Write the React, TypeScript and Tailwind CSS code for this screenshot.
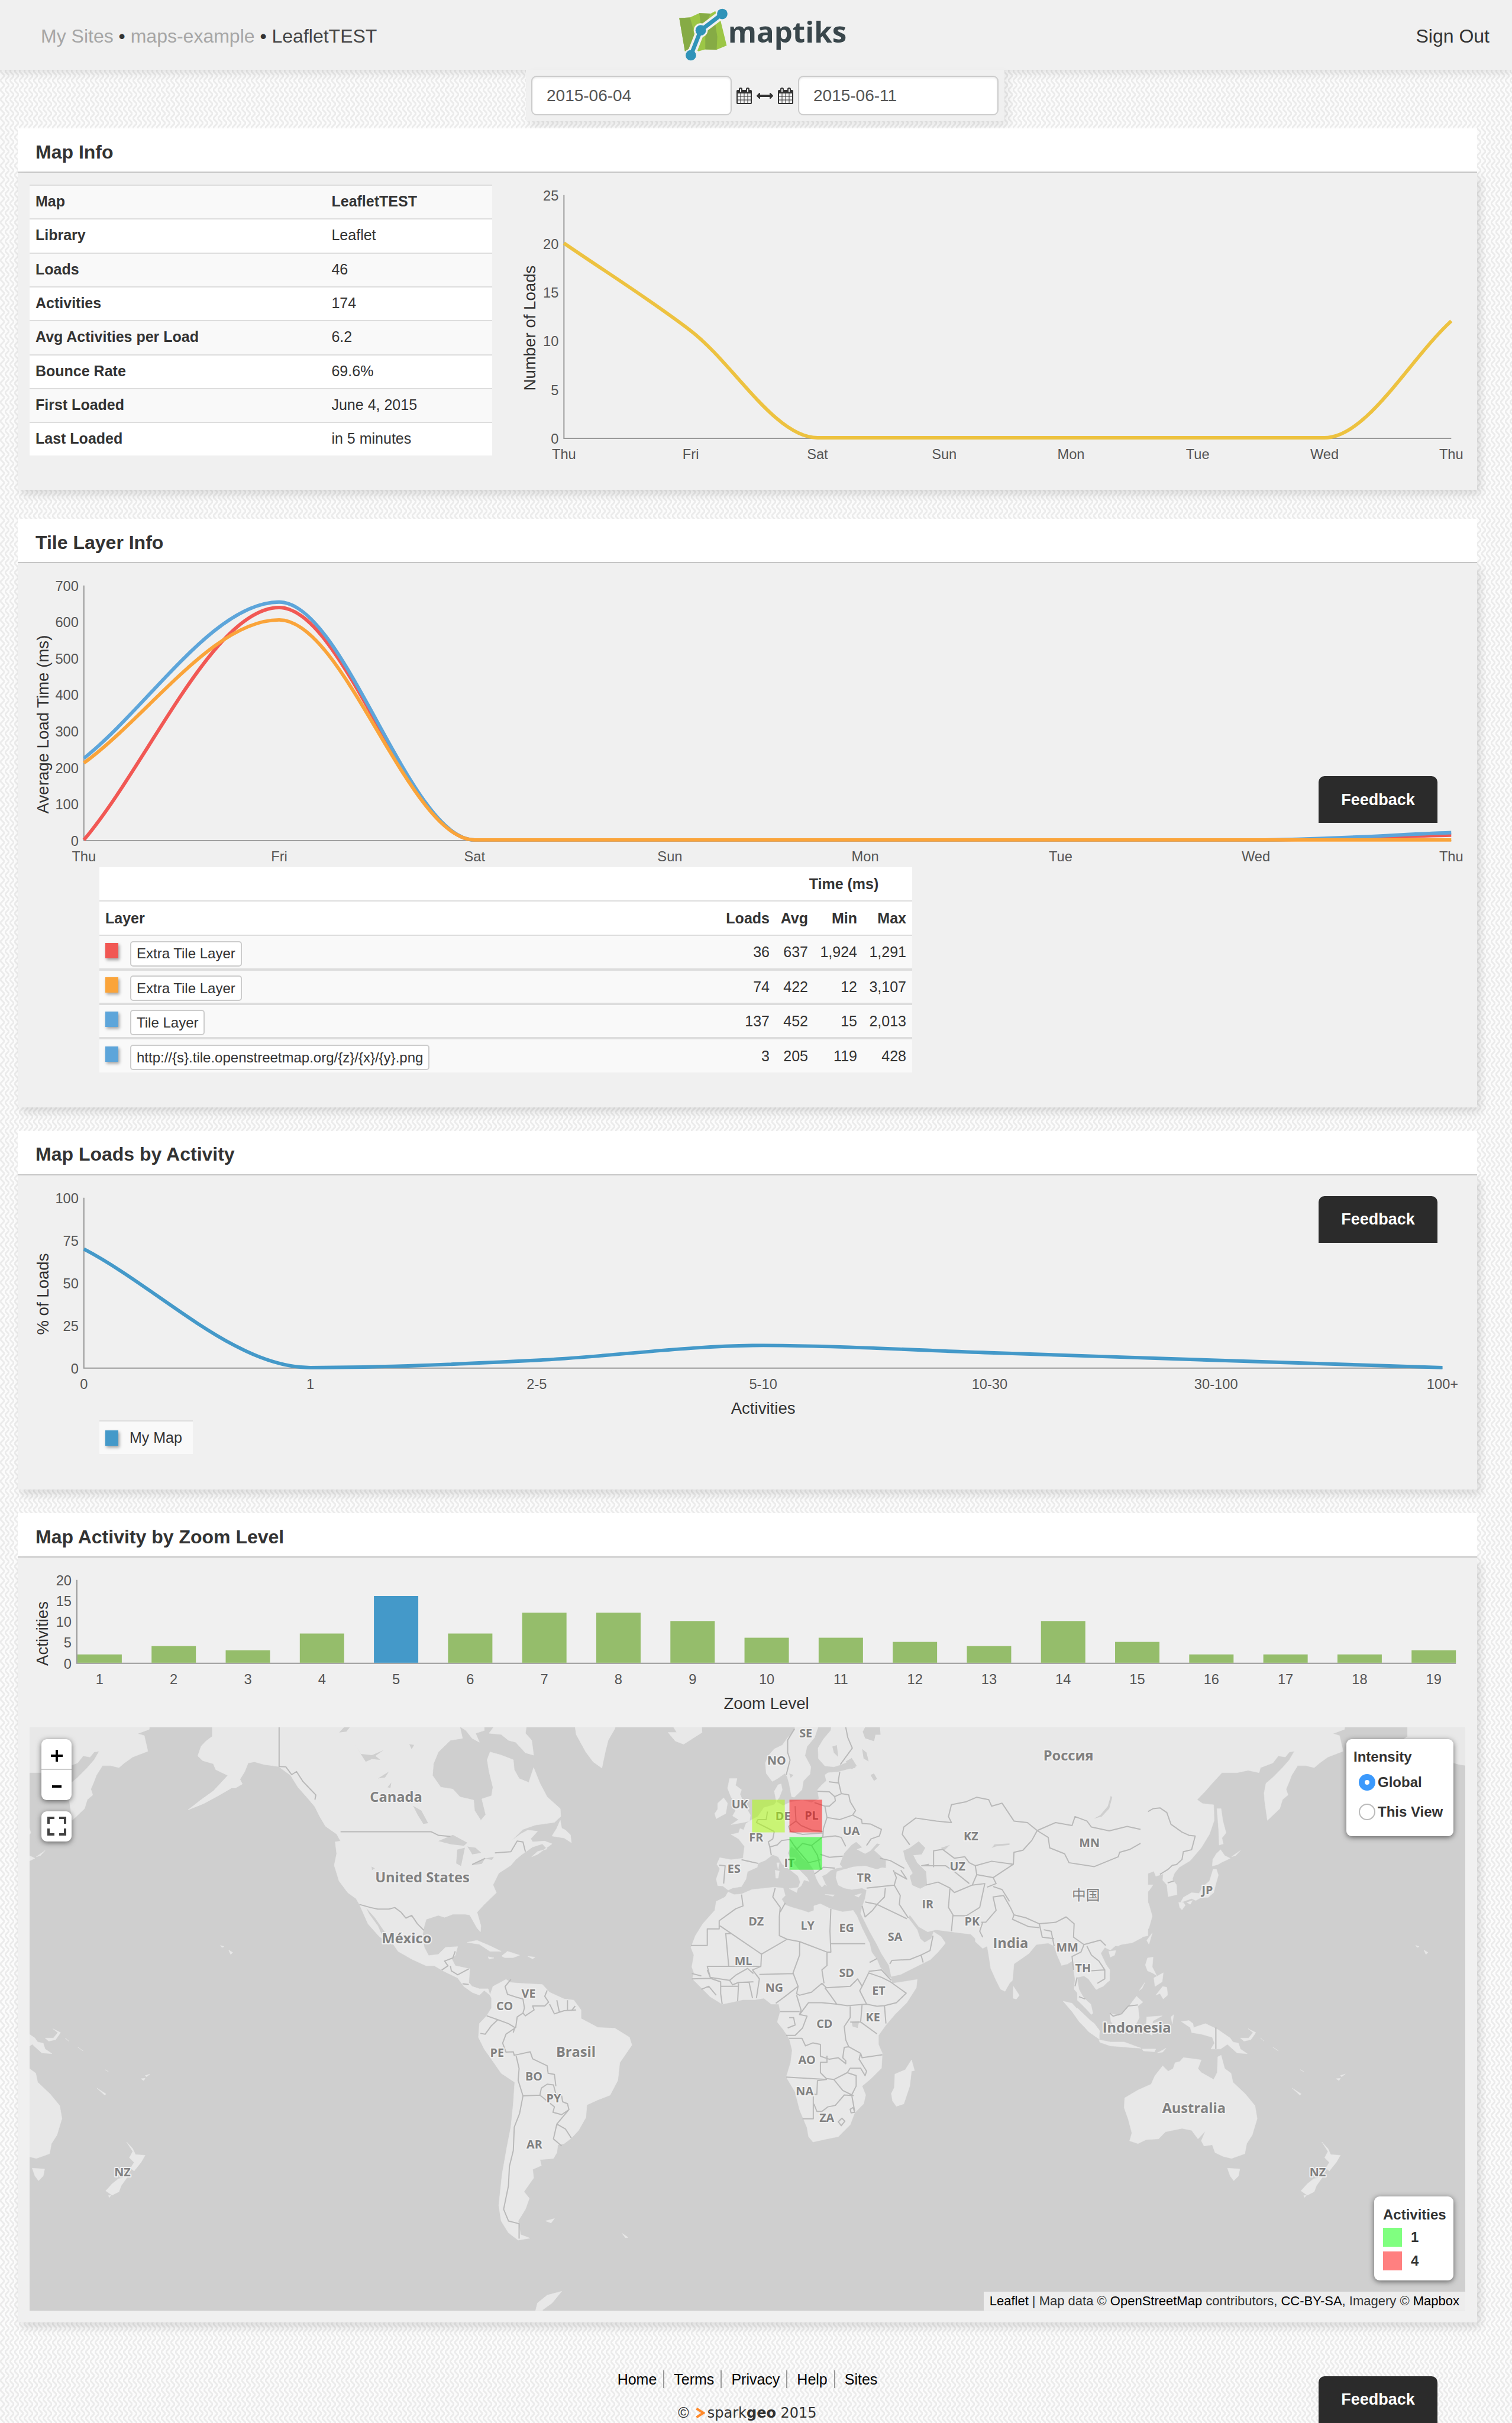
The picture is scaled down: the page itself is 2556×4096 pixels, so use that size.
import React from "react";

type Point = [number, number];

/* Cubic path that never overshoots its data points. */
function smoothPath(points: Point[]): string {
  const n = points.length;
  const slope = points.slice(1).map((p, i) => (p[1] - points[i][1]) / (p[0] - points[i][0]));
  const tangent = points.map((_, i) => {
    if (i === 0) return slope[0];
    if (i === n - 1) return slope[n - 2];
    const a = slope[i - 1];
    const b = slope[i];
    return (Math.sign(a) + Math.sign(b)) * Math.min(Math.abs(a), Math.abs(b), Math.abs(a + b) / 4);
  });
  let d = `M${points[0][0]} ${points[0][1]}`;
  for (let i = 1; i < n; i++) {
    const [x0, y0] = points[i - 1];
    const [x1, y1] = points[i];
    const h = (x1 - x0) / 3;
    d += `C${x0 + h} ${y0 + h * tangent[i - 1]} ${x1 - h} ${y1 - h * tangent[i]} ${x1} ${y1}`;
  }
  return d;
}

interface ChartProps {
  label: string;
  viewBox: string;
  left: number;
  right: number;
  top: number;
  bottom: number;
  max: number;
  yTicks: number[];
  xTicks: { x: number; text: string }[];
  yTitle: string;
  yTitleX: number;
  yTitleY: number;
  xTitle?: string;
  children: React.ReactNode;
}

function Chart(p: ChartProps) {
  const y = (v: number) => p.bottom - (v / p.max) * (p.bottom - p.top);
  return (
    <svg viewBox={p.viewBox} className="block h-auto w-full" role="img" aria-label={p.label}>
      <path d={`M${p.left} ${p.top}V${p.bottom}H${p.right}`} fill="none" stroke="#999" strokeWidth="2" />
      {p.children}
      <g className="fill-[#555] text-[24px]">
        {p.yTicks.map((v) => (
          <text key={v} x={p.left - 9} y={y(v) + 9} textAnchor="end">
            {v}
          </text>
        ))}
        {p.xTicks.map((t, i) => (
          <text key={i} x={t.x} y={p.bottom + 36} textAnchor="middle">
            {t.text}
          </text>
        ))}
      </g>
      <g className="fill-[#333] text-[28px]">
        <text transform={`translate(${p.yTitleX} ${p.yTitleY}) rotate(-90)`} textAnchor="middle">
          {p.yTitle}
        </text>
        {p.xTitle && (
          <text x={(p.left + p.right) / 2} y={p.bottom + 78} textAnchor="middle">
            {p.xTitle}
          </text>
        )}
      </g>
    </svg>
  );
}

const DAYS = ["Thu", "Fri", "Sat", "Sun", "Mon", "Tue", "Wed", "Thu"];

function LoadsChart() {
  const left = 965, right = 2486, top = 334, bottom = 751;
  const x = (i: number) => left + (i * (right - left)) / 7;
  const pts = [20, 11, 0, 0, 0, 0, 0, 12].map((v, i): Point => [x(i), bottom - 1 - (v / 25) * (bottom - top)]);
  return (
    <Chart label="Number of loads per day" viewBox="842 316 1668 484" left={left} right={right} top={top} bottom={bottom}
      max={25} yTicks={[0, 5, 10, 15, 20, 25]} xTicks={DAYS.map((text, i) => ({ x: x(i), text }))}
      yTitle="Number of Loads" yTitleX={916} yTitleY={562}>
      <path d={smoothPath(pts)} fill="none" stroke="#edc240" strokeWidth="6" />
    </Chart>
  );
}

const TILE_SERIES = [
  { color: "#f15854", values: [0, 638, 0, 0, 0, 0, 0, 13] },
  { color: "#5da5da", values: [224, 653, 0, 0, 0, 0, 0, 20] },
  { color: "#faa43a", values: [211, 604, 0, 0, 0, 0, 0, 0] },
];

function TileChart() {
  const left = 143, right = 2486, top = 1004, bottom = 1441;
  const x = (i: number) => left + (i * (right - left)) / 7;
  return (
    <Chart label="Average load time per tile layer" viewBox="50 986 2460 500" left={left} right={right} top={top} bottom={bottom}
      max={700} yTicks={[0, 100, 200, 300, 400, 500, 600, 700]} xTicks={DAYS.map((text, i) => ({ x: x(i), text }))}
      yTitle="Average Load Time (ms)" yTitleX={82} yTitleY={1242}>
      {TILE_SERIES.map((s) => (
        <path key={s.color} fill="none" stroke={s.color} strokeWidth="6"
          d={smoothPath(s.values.map((v, i): Point => [x(i), bottom - 1 - (v / 700) * (bottom - top)]))} />
      ))}
    </Chart>
  );
}

function ActivityChart() {
  const left = 143, right = 2471, top = 2052, bottom = 2344;
  const x = (i: number) => left + (i * (right - left)) / 6;
  const pts = [69.6, 0, 4.3, 13, 8.7, 4.3, 0].map((v, i): Point => [x(i), bottom - 1 - (v / 100) * (bottom - top)]);
  return (
    <Chart label="Percentage of loads by activity count" viewBox="50 2034 2460 400" left={left} right={right} top={top} bottom={bottom}
      max={100} yTicks={[0, 25, 50, 75, 100]}
      xTicks={["0", "1", "2-5", "5-10", "10-30", "30-100", "100+"].map((text, i) => ({ x: x(i), text }))}
      yTitle="% of Loads" yTitleX={82} yTitleY={2217} xTitle="Activities">
      <path d={smoothPath(pts)} fill="none" stroke="#4499c9" strokeWidth="6" />
    </Chart>
  );
}

const ZOOM_COUNTS = [2, 4, 3, 7, 16, 7, 12, 12, 10, 6, 6, 5, 4, 10, 5, 2, 2, 2, 3];

function ZoomChart() {
  const left = 131, right = 2494, top = 2706, bottom = 2849;
  const x = (i: number) => 132 + i * 127;
  return (
    <Chart label="Map activities by zoom level" viewBox="50 2688 2460 270" left={left} right={right} top={top} bottom={bottom}
      max={20} yTicks={[0, 5, 10, 15, 20]} xTicks={ZOOM_COUNTS.map((_, i) => ({ x: x(i) + 38, text: String(i + 1) }))}
      yTitle="Activities" yTitleX={81} yTitleY={2798} xTitle="Zoom Level">
      {ZOOM_COUNTS.map((v, i) => {
        const h = (v / 20) * (bottom - top);
        return <rect key={i} x={x(i)} y={bottom - 1 - h} width="76" height={h} fill={i === 4 ? "#4499c9" : "#95bd6b"} />;
      })}
    </Chart>
  );
}

/* ---------- World map drawing ---------- */

const AMERICAS_LAND = [
  "M438 0L438 50L425 62L415 75L408 100L418 112L440 120L445 135L470 150L455 170L440 190L415 212L388 238L420 222L450 202L478 182L486 182L500 172L495 160L505 140L512 118L525 115L545 122L575 127L600 150L615 180L635 208L650 230L660 255L672 280L695 300L703 318L692 320L695 350L690 380L700 420L718 450L735 465L742 480L760 530L783 562L792 570L780 535L762 505L755 487L775 515L800 560L822 600L850 620L880 637L897 637L915 650L945 668L958 690L975 705L990 712L1000 700L1012 712L1008 696L990 696L975 690L968 680L970 645L940 637L933 620L940 610L945 588L920 590L905 608L885 611L876 590L872 560L876 535L880 518L905 508L918 513L935 505L960 505L970 507L985 540L992 550L993 535L985 500L1000 480L1025 450L1018 430L1030 400L1055 380L1065 365L1078 352L1100 333L1120 325L1130 338L1110 345L1098 358L1110 352L1140 325L1125 318L1100 320L1096 312L1110 293L1090 290L1075 300L1055 318L1080 288L1105 277L1145 270L1158 255L1157 235L1130 205L1115 170L1102 130L1092 168L1072 158L1062 135L1060 110L1035 98L1012 90L1006 110L1010 140L1018 180L1015 202L995 210L1003 250L993 265L980 240L978 213L950 205L935 185L910 180L893 150L895 120L905 90L930 60L955 55L945 0Z",
  "M1010 42L1035 45L1050 60L1065 65L1085 92L1102 98L1098 60L1085 42L1090 0L1035 0Z",
  "M950 25L962 35L975 55L990 65L982 42L1000 35L1000 0L950 0Z",
  "M1157 265L1150 285L1140 305L1165 310L1180 322L1178 302L1168 290L1160 285Z",
  "M1185 0L1190 45L1210 90L1225 115L1243 131L1250 90L1256 60L1270 30L1275 0Z",
  "M1380 40L1398 40L1388 20L1390 0L1448 0L1450 40L1412 70L1395 62Z",
  "M965 577L985 572L1010 585L1035 600L1012 600L990 582Z",
  "M1036 612L1048 600L1073 610L1060 616L1042 616Z M1090 613L1105 615L1100 619Z M1008 614L1020 617L1010 620Z",
  "M472 597L480 603L476 608Z M455 585L462 588L458 590Z",
  "M1012 712L1018 690L1045 672L1055 680L1075 682L1120 685L1135 705L1165 722L1185 725L1200 750L1200 772L1235 795L1270 797L1300 820L1305 840L1280 885L1276 930L1260 968L1235 980L1212 993L1210 1025L1195 1058L1180 1078L1165 1092L1152 1095L1150 1115L1143 1130L1115 1133L1118 1148L1100 1158L1102 1180L1082 1215L1093 1232L1085 1260L1070 1290L1075 1325L1094 1334L1070 1339L1050 1320L1035 1290L1030 1250L1037 1170L1047 1100L1055 1050L1060 990L1063 935L1035 912L1020 885L1000 850L988 820L990 785L1005 765L1015 745L1015 720Z",
  "M1127 1290L1145 1284L1138 1295Z M1285 1322L1297 1332L1292 1333Z",
  "M1105 1525L1110 1500L1130 1480L1160 1470L1140 1500L1120 1518L1125 1525Z",
];

const AMERICAS_LAKES =
  "M905 318L935 302L965 322L958 330L930 326ZM944 340L960 335L952 382L942 375ZM965 332L982 335L994 348L975 352L972 345ZM973 380L1002 362L995 376ZM1000 363L1020 358L1016 366ZM853 228L870 240L884 272L874 274L862 250ZM780 158L803 140L795 155ZM732 70L745 95L768 98L792 85L775 100L785 110L768 108L755 115ZM845 70L855 72L850 83ZM800 180L808 168L806 182ZM767 383L774 388L768 392ZM700 40L710 27L722 27L715 38Z";

const AMERICAS_BORDERS =
  "M576 0V127L590 128L602 148L612 140L625 165L638 182L652 200L650 212M703 294H890L905 303L930 306M975 378L1002 362M1022 348L1055 345L1068 318L1080 320L1085 345M742 480L765 488L780 492L803 492L815 488L828 500L838 515L850 508L862 530L875 546M912 648L925 637L918 625L935 617L940 600M930 637L932 650L945 660L968 645M955 683L968 685M1055 672L1043 690L1048 710L1068 718L1080 722L1083 745L1080 758L1068 768L1065 795L1045 812L1038 835L1045 858L1060 857L1062 866L1095 857L1100 875L1130 893L1132 912L1145 915L1148 945M1130 700L1125 715L1133 730L1125 740L1100 740L1103 750L1085 765L1080 758M1135 735L1145 760L1165 752L1190 750M1150 725L1155 755M1172 725V750M1188 740L1180 752M1005 765L1028 775L1015 790L1002 812L992 810M1028 775L1050 785L1063 795L1060 808M1066 868L1072 900L1070 930L1080 970L1115 968L1118 950L1130 940L1143 942L1148 965L1160 970L1162 985L1172 990L1175 1005L1160 1018L1142 1012L1145 998L1115 968M1175 1005L1150 1042L1168 1055L1180 1078M1150 1042L1143 1080L1160 1098M1080 970L1073 1015L1062 1050L1060 1110L1052 1150L1050 1200L1040 1260L1050 1290L1072 1297V1335";

const EURAFRICA_LAND = [
  "M418 0L413 45L390 70L372 95L345 108L325 130L315 155L318 190L338 217L355 208L380 190L388 200L395 225L403 268L412 270L425 258L438 245L443 215L465 192L468 168L448 130L455 100L480 70L492 35L495 0Z",
  "M540 0L535 45L510 75L492 105L493 140L515 165L545 168L565 162L595 150L612 148L618 172L598 175L560 185L525 188L515 195L520 215L505 228L490 245L495 275L470 288L440 280L400 286L375 298L352 285L345 250L358 228L368 225L372 245L362 270L345 295L310 305L290 335L270 345L250 358L242 380L230 375L225 390L200 395L225 410L245 435L240 475L200 480L162 473L152 495L162 510L150 545L155 567L172 568L190 582L205 575L235 570L250 545L255 520L288 505L290 492L315 482L340 463L358 470L372 495L400 515L425 535L432 555L425 575L435 568L445 548L462 553L455 540L425 510L405 485L390 458L402 435L420 448L440 475L465 495L478 515L485 540L495 560L505 572L515 562L520 568L505 535L520 528L535 515L555 508L575 505L575 470L720 480L720 508L650 500L610 503L580 512L555 520L552 540L560 565L580 575L605 580L640 575L655 582L650 610L640 640L635 660L665 720L690 765L705 795L730 835L738 872L770 865L840 830L870 815L895 790L920 760L905 738L880 722L872 745L850 758L835 745L825 715L795 675L800 665L830 705L860 722L888 715L940 722L1005 730L1020 745L1020 755L1045 778L1060 770L1065 800L1072 845L1090 885L1105 915L1120 922L1135 895L1145 885L1150 830L1200 795L1225 765L1265 760L1285 770L1295 800L1310 835L1330 830L1345 820L1355 880L1352 915L1370 935L1378 965L1410 1000L1415 995L1408 965L1385 945L1368 915L1362 875L1385 870L1400 880L1425 915L1450 905L1470 885L1472 850L1450 820L1432 790L1440 770L1470 765L1500 770L1530 750L1600 735L1600 0Z",
  "M195 207L220 207L215 230L235 245L230 260L245 295L265 330L262 350L240 355L200 362L225 345L205 333L215 315L205 300L215 290L200 270L188 240Z",
  "M155 290L175 272L188 290L182 325L150 342L145 325L155 310Z",
  "M395 577L425 573L420 590ZM348 515L362 518L358 542L350 542ZM353 490L362 490L358 512ZM515 596L547 598L542 603ZM615 600L638 593L628 606Z",
  "M190 588L210 597L235 595L270 580L345 572L375 575L382 600L370 612L382 632L405 640L440 650L460 657L478 650L478 635L500 628L535 645L575 655L610 650L622 668L640 710L665 760L672 790L690 815L700 840L725 870L738 878L740 895L775 890L825 882L822 910L790 960L750 1000L720 1035L695 1070L695 1100L708 1130L705 1180L670 1215L640 1240L652 1270L645 1300L615 1330L600 1370L560 1410L520 1418L475 1428L460 1410L455 1380L430 1320L415 1260L385 1210L400 1160L405 1120L395 1080L375 1050L355 1025L365 990L360 965L335 965L310 945L280 950L240 950L205 958L170 965L130 940L100 910L70 880L75 860L68 840L75 800L65 775L80 735L105 695L145 650L150 620L180 605Z",
  "M806 1152L816 1188L806 1190L800 1240L780 1300L755 1308L742 1290L738 1265L748 1245L750 1200L785 1185Z",
  "M1148 905L1168 935L1158 948L1147 945Z",
  "M1315 955L1345 962L1380 1000L1420 1030L1438 1055L1435 1080L1405 1060L1370 1025L1345 990Z",
];

const EURAFRICA_WATER =
  "M650 35L700 35L702 60L685 60L680 82L650 72L642 50ZM585 150L605 138L622 165L605 176ZM640 108L655 120L662 150L645 140ZM668 195L680 190L690 208L680 215ZM565 495L580 458L605 430L620 420L640 438L622 445L650 460L668 450L690 425L700 428L680 448L710 475L720 500L690 512L650 500L610 503L580 512ZM778 450L800 440L830 418L852 440L840 462L812 465L825 490L855 520L858 565L835 577L808 565L800 535L810 525L785 480ZM1418 342L1440 330L1465 300L1475 265L1480 270L1470 308L1445 335ZM1075 440L1085 428L1135 425L1135 430L1090 435ZM605 1025L630 1022L625 1045L608 1040ZM905 440L935 430L915 450ZM395 190L410 195L400 205ZM540 100L555 95L560 135L545 120Z";

const EURAFRICA_BORDERS =
  "M413 40L390 78L390 120L398 145L385 195M585 35L592 70L607 105L567 160M565 185L560 215L570 258L548 268L530 252L490 250M528 218L560 222M548 268L550 282L530 300L515 300L522 338L565 345L608 330L618 315L600 285L595 262L570 258M515 300L480 288M608 330L638 345L640 358L668 360L705 378L698 400L670 410L655 432M522 338L510 375L508 405M415 300L418 350L435 365L470 380L508 385M418 350L393 368L400 385L440 395L508 390M322 318L318 345L290 345L285 355L325 375L345 385M345 385L340 410L325 420L330 437L355 430L370 415L398 412M330 437L335 465M235 480L290 492M160 498L180 500L175 560M398 412L420 445L440 425L470 432L505 405L550 400L570 405L585 435M500 462L530 472L575 468M410 430L430 455L460 490L500 480M470 432L490 465L500 510M480 528L510 505L548 508M700 475L735 483L780 508L765 500M745 515L755 540L748 565L655 575M748 565L768 600L765 630L795 675M718 575L715 605L690 630L790 678M650 622L690 630L675 650L650 672L640 635M745 520L790 545L770 515M733 830L740 818L800 815L838 800L868 785L878 735M838 800L845 825M855 565L895 555L935 575L930 640L945 665L940 720M945 668L990 668L1035 640L1052 560L1010 565L950 590L935 575M1000 560L950 520L920 500L840 500L865 495M880 505V450L910 445L950 475L985 470L1000 490L1020 500L1075 485L1148 495M1020 500L1025 530L1080 540L1090 560L1060 572M1025 530L1010 565M1040 690L1055 690L1090 650L1080 605L1115 600L1138 640L1150 665L1190 675L1235 695L1290 690L1325 672L1352 695L1350 740L1385 765L1440 750L1458 768M1045 690L1035 720L1045 740M1080 570L1110 580L1135 620M1235 695L1245 740L1285 745M1150 665L1145 680L1200 705L1235 708M1250 715L1275 720L1285 770M800 430L775 395L780 370L820 340L890 350L940 355L930 335L940 295L990 285L1025 270L1065 278L1075 300L1110 290L1150 350L1195 355L1228 382L1210 415L1180 448L1150 455L1148 495L1080 540M1228 382L1290 355L1345 365L1355 335L1395 350L1410 370L1470 383L1530 368L1575 378M1228 382L1265 405L1270 440L1320 460L1335 490L1420 503L1500 470L1505 455L1540 445L1575 425M1385 765L1375 790L1345 805L1350 850M1395 770L1410 800L1435 820L1455 850L1410 853M1455 850V880L1430 895M1362 875L1355 905M1368 940L1390 948M235 597L240 635L215 645L160 685V712H120V768H65M160 700L302 797L300 838H120L130 875M192 838L182 728H200M302 797L388 747L430 755L522 790V835L505 850L512 895M388 747L362 735V670L365 640L340 605L348 575M365 655L382 625M535 645L532 720L535 790L522 790M535 762H650M430 755L430 800L408 860L425 905L380 940L350 962M295 865L408 862M300 838L272 850L295 880L285 945M120 850L130 875L195 885L215 868L255 845L275 862M195 885L205 900L225 892L275 890M225 895L222 955M260 890L272 945M68 862L100 870M68 880L130 878L165 890V930L170 965M100 915L125 905L150 935M165 905L222 905M425 905L420 930L430 935L470 925L505 895L520 910L600 905L625 880L640 905L632 920L655 965L590 970L555 965L530 930L515 910M420 935L435 985L430 1000L460 960L505 960L555 965M430 1000L455 1005L440 1045L415 1070L385 1070M365 990H430M395 1010L410 1010L415 1035L390 1045M655 965L690 972L715 970L720 1030M640 905L662 860L705 875L735 890L788 928L755 960L715 970M665 825L690 812M662 855L705 850L738 885M600 970L600 1010L580 1040L585 1085L595 1108L635 1130L640 1145L708 1135M600 1025L635 1025L690 1065M635 1025L640 965M395 1080H438L450 1105L475 1095L500 1100V1140L530 1150L560 1145L585 1165V1155L575 1145L580 1110L595 1108M522 1138V1160H500V1195L520 1215L545 1218L590 1195L600 1180L635 1180L650 1205L655 1190L630 1150L635 1130M385 1210L520 1218L490 1222L488 1268H476V1350H440M545 1218L575 1255L610 1272L580 1270L550 1305L525 1310L505 1325L488 1325L478 1300M590 1195L620 1205V1240L605 1270L615 1325M560 1360L572 1348L582 1358L570 1373ZM600 1318L610 1312L615 1328L603 1330Z";

const PACIFIC_LAND = [
  "M-20 0L965 0L960 32L918 43L942 48L955 88L900 103L870 118L850 130L820 125L790 125L768 150L760 165L748 185L755 200L735 212L725 235L695 255L680 265L670 215L668 195L675 170L700 155L735 130L760 110L778 88L760 90L745 103L720 100L700 118L655 130L650 143L610 137L570 143L515 143L480 170L455 190L425 212L445 222L485 225L487 265L470 300L440 335L400 368L360 385L343 400L335 415L350 430L352 455L320 460L315 430L300 418L302 402L275 408L268 395L242 402L215 412L222 430L265 430L250 445L232 455L250 480L262 510L250 540L225 565L190 578L130 585L110 597L90 590L75 605L105 650L107 675L85 685L60 698L50 680L20 655L-20 640Z",
  "M497 235L512 235L518 265L530 297L515 310L520 325L505 328L503 290Z",
  "M480 382L482 365L495 350L510 340L525 355L545 362L515 372L500 378Z",
  "M483 390L495 390L502 405L492 430L485 450L465 462L440 462L420 470L405 465L385 470L365 475L375 462L405 450L432 452L445 435L470 420Z",
  "M358 475L375 475L382 482L370 494L362 488ZM388 475L408 470L400 480ZM550 358L582 342L565 355Z",
  "M262 553L250 582L242 572Z",
  "M104 600L130 598L125 610L110 615Z",
  "M245 617L265 615L262 640L278 662L262 655L245 650L237 635ZM268 668L302 655L298 678L272 690ZM275 712L300 690L315 692L318 712L302 722L290 708ZM215 700L235 680L225 695Z",
  "M108 758L140 765L178 740L205 715L228 730L210 740L215 770L200 790L180 810L130 795L112 780Z",
  "M242 768L298 765L265 778L262 785L285 780L275 800L262 795L262 815L248 810L240 790ZM330 768L340 762L335 785Z",
  "M-10 745L30 772L68 800L70 825L30 805L-10 770ZM-10 705L20 722L45 760L20 745L-10 725Z",
  "M68 826L110 832L160 832L222 848L180 846L110 842L72 833ZM225 850H275L270 857L230 855ZM280 860L312 848L300 858Z",
  "M368 780L395 777L410 785L412 795L455 785L500 800L545 822L555 832L575 835L582 850L607 862L570 860L535 838L510 850L475 850L488 835L480 820L440 812L405 808L400 795Z",
  "M582 822L612 822L628 808L610 798L638 808L620 826L595 830ZM655 822L668 830ZM700 845L720 855Z",
  "M162 975L210 955L258 940L272 918L300 893L320 907L338 900L345 885L362 882L375 872L410 875L440 878L428 900L440 910L485 928L498 910L500 870L512 866L525 900L548 912L555 935L600 965L635 995L643 1028L625 1070L605 1092L598 1118L570 1125L550 1130L520 1125L490 1115L480 1095L450 1098L440 1085L455 1060L428 1080L405 1058L370 1053L310 1062L285 1080L240 1082L210 1092L180 1085L188 1065L175 1030L160 1000Z",
  "M535 1155L580 1157L575 1175L558 1187L545 1175Z",
  "M878 1088L900 1105L910 1120L945 1122L930 1140L905 1162L892 1155L905 1140L888 1128L900 1112Z",
  "M848 1182L880 1178L858 1200L850 1215L825 1224L802 1213L825 1195Z",
  "M770 950L803 965L798 968ZM930 926L945 925L940 931ZM945 918L963 914L950 921ZM800 903L812 908ZM812 1225L822 1224L815 1230Z",
];

const PACIFIC_BORDERS =
  "M-10 370L55 383L100 375L140 358L138 345L160 345L185 335L215 320L238 322L215 310L185 305L200 285L225 280L240 245L265 235L290 233L315 245L330 275L370 295L395 303L418 305L405 340L375 345L370 365L350 378L335 380L320 390L290 403M-10 258L30 270L75 278L120 292L160 290L200 285M318 425L340 420M493 795V850M108 758L120 766L150 760L175 740L210 737";

const MAP_LABELS: [string, number, number, "lg" | "sm"][] = [
  ["Canada", 678, 3077, "lg"], ["United States", 723, 3215, "lg"], ["México", 696, 3319, "lg"], ["Brasil", 986, 3514, "lg"],
  ["Россия", 1830, 3006, "lg"], ["中国", 1860, 3245, "lg"], ["India", 1731, 3327, "lg"], ["Indonesia", 1947, 3472, "lg"],
  ["Australia", 2045, 3610, "lg"], ["VE", 905, 3414, "sm"], ["CO", 864, 3436, "sm"], ["PE", 851, 3516, "sm"], ["BO", 914, 3556, "sm"],
  ["PY", 948, 3594, "sm"], ["AR", 915, 3673, "sm"], ["NZ", 209, 3720, "sm"], ["NZ", 2257, 3720, "sm"], ["SE", 1380, 2968, "sm"],
  ["NO", 1330, 3015, "sm"], ["UK", 1267, 3090, "sm"], ["DE", 1341, 3110, "sm"], ["PL", 1390, 3109, "sm"], ["FR", 1295, 3147, "sm"],
  ["UA", 1458, 3135, "sm"], ["KZ", 1663, 3145, "sm"], ["MN", 1866, 3156, "sm"], ["ES", 1257, 3200, "sm"], ["IT", 1352, 3190, "sm"],
  ["TR", 1480, 3216, "sm"], ["UZ", 1640, 3196, "sm"], ["IR", 1589, 3261, "sm"], ["DZ", 1295, 3291, "sm"], ["LY", 1383, 3298, "sm"],
  ["EG", 1450, 3302, "sm"], ["SA", 1533, 3317, "sm"], ["PK", 1665, 3291, "sm"], ["MM", 1828, 3335, "sm"], ["TH", 1855, 3371, "sm"],
  ["ML", 1273, 3358, "sm"], ["SD", 1450, 3379, "sm"], ["ET", 1505, 3409, "sm"], ["NG", 1326, 3404, "sm"], ["KE", 1495, 3455, "sm"],
  ["CD", 1412, 3466, "sm"], ["AO", 1382, 3528, "sm"], ["NA", 1378, 3581, "sm"], ["ZA", 1416, 3627, "sm"], ["JP", 2068, 3237, "sm"],
];

function Region(p: { transform: string; land: string[]; water?: string; borders: string }) {
  return (
    <g transform={p.transform}>
      {p.land.map((d, i) => (
        <path key={i} d={d} fill="#e8e8e8" stroke="#e8e8e8" strokeWidth="1" strokeLinejoin="round" />
      ))}
      {p.water && <path d={p.water} fill="#cfcfcf" />}
      <path d={p.borders} fill="none" stroke="#b9b9b9" strokeWidth="2" strokeLinejoin="round" vectorEffect="non-scaling-stroke" />
    </g>
  );
}

function WorldMap() {
  return (
    <svg viewBox="50 2958 2460 1000" className="block h-auto w-full overflow-visible" role="img" aria-label="World map of activity">
      <defs>
        <g id="world">
          <Region transform="translate(0 2940) scale(.82908 .66964)" land={AMERICAS_LAND} water={AMERICAS_LAKES} borders={AMERICAS_BORDERS} />
          <Region transform="translate(1850 2940) scale(.47194 .66964)" land={PACIFIC_LAND} borders={PACIFIC_BORDERS} />
          <Region transform="translate(1150 2940) scale(.5102)" land={EURAFRICA_LAND} water={EURAFRICA_WATER} borders={EURAFRICA_BORDERS} />
        </g>
        <clipPath id="map-frame">
          <rect x="50" y="2958" width="2460" height="1000" />
        </clipPath>
      </defs>
      <g clipPath="url(#map-frame)">
        <rect x="50" y="2958" width="2460" height="1000" fill="#cfcfcf" />
        <use href="#world" x="-2048" />
        <use href="#world" x="2048" />
        <use href="#world" />
      </g>
      <g textAnchor="middle" fill="#808080" stroke="#f0f0f0" strokeWidth="4" strokeLinejoin="round" paintOrder="stroke"
        className="font-['Open_Sans','Noto_Sans_CJK_SC',sans-serif]">
        {MAP_LABELS.map(([name, x, y, size], i) => (
          <text key={i} x={x} y={y + (size === "lg" ? 9 : 7)} fontWeight={name === "中国" ? 400 : 700}
            className={size === "lg" ? "text-[24px]" : "text-[20px]"}>
            {name}
          </text>
        ))}
      </g>
      <rect x="1288" y="3082" width="56" height="56" fill="#af0" fillOpacity=".5" />
      <rect x="1352" y="3082" width="56" height="56" fill="#f00" fillOpacity=".5" />
      <rect x="1352" y="3146" width="56" height="56" fill="#0f0" fillOpacity=".5" />
    </svg>
  );
}

/* ---------- Page pieces ---------- */

function Logo() {
  return (
    <svg viewBox="1140 0 310 120" className="h-[118px] w-[306px]" role="img" aria-label="maptiks">
      <g transform="translate(860 0) scale(.574 .3333)">
        <path d="M528 93L560 90L588 68L622 70L636 57L645 100L652 108L670 235L640 256L606 255L585 265L568 240L545 265Z" fill="#9cc646" />
        <path d="M528 93L560 90L570 150L573 200L568 240L545 265ZM588 68L622 70L612 105L600 130L592 120ZM606 165L636 125L642 190L640 256L606 255Z" fill="#86ab45" />
      </g>
      <path d="M1237 24L1200 52L1183 95" fill="none" stroke="#f0f0f0" strokeWidth="15" />
      <circle cx="1200" cy="52" r="12" fill="#f0f0f0" />
      <circle cx="1237" cy="24" r="11" fill="#f0f0f0" />
      <circle cx="1183" cy="95" r="11" fill="#f0f0f0" />
      <path d="M1237 24L1200 52L1183 95" fill="none" stroke="#2f93b8" strokeWidth="7" />
      <circle cx="1237" cy="24" r="9" fill="#2f93b8" />
      <circle cx="1200" cy="52" r="9" fill="#2f93b8" />
      <circle cx="1183" cy="95" r="9" fill="#2f93b8" />
      <text x="1247" y="73" fill="#39464b" className="font-['Open_Sans',sans-serif] text-[50px] font-bold">
        maptiks
      </text>
    </svg>
  );
}

function CalendarIcon() {
  return (
    <svg viewBox="0 0 1664 1792" className="h-7 w-[26px]" fill="#333" aria-hidden="true">
      <path d="M128 1664h288v-288h-288v288zM480 1664h320v-288h-320v288zM128 1312h288v-320h-288v320zM480 1312h320v-320h-320v320zM128 928h288v-288h-288v288zM864 1664h320v-288h-320v288zM480 928h320v-288h-320v288zM1248 1664h288v-288h-288v288zM864 1312h320v-320h-320v320zM512 448v-288q0-13-9.5-22.5t-22.5-9.5h-64q-13 0-22.5 9.5t-9.5 22.5v288q0 13 9.5 22.5t22.5 9.5h64q13 0 22.5-9.5t9.5-22.5zM1248 1312h288v-320h-288v320zM864 928h320v-288h-320v288zM1248 928h288v-288h-288v288zM1280 448v-288q0-13-9.5-22.5t-22.5-9.5h-64q-13 0-22.5 9.5t-9.5 22.5v288q0 13 9.5 22.5t22.5 9.5h64q13 0 22.5-9.5t9.5-22.5zM1664 384v1280q0 52-38 90t-90 38h-1408q-52 0-90-38t-38-90v-1280q0-52 38-90t90-38h128v-96q0-66 47-113t113-47h64q66 0 113 47t47 113v96h384v-96q0-66 47-113t113-47h64q66 0 113 47t47 113v96h128q52 0 90 38t38 90z" fillRule="evenodd" />
    </svg>
  );
}

function ArrowsIcon() {
  return (
    <svg viewBox="0 0 1792 1792" className="size-7" fill="#333" aria-hidden="true">
      <path d="M1792 896q0 26-19 45l-256 256q-19 19-45 19t-45-19-19-45v-128h-1024v128q0 26-19 45t-45 19-45-19l-256-256q-19-19-19-45t19-45l256-256q19-19 45-19t45 19 19 45v128h1024v-128q0-26 19-45t45-19 45 19l256 256q19 19 19 45z" />
    </svg>
  );
}

function Panel(p: { title: string; className?: string; children: React.ReactNode }) {
  return (
    <section className={p.className}>
      <h2 className="flex h-[75px] items-center border-b-2 border-[#c8c8c8] bg-white px-[30px] pt-[6px] text-[32px] font-bold">{p.title}</h2>
      <div className="bg-[#f0f0f0] px-5 pt-5 shadow-[6px_8px_14px_rgba(0,0,0,0.12)]">{p.children}</div>
    </section>
  );
}

function FeedbackButton({ className }: { className: string }) {
  return (
    <button type="button" className={`absolute h-[79px] w-[201px] rounded-t-[10px] bg-[#2b2b2b] text-[27px] font-bold text-white ${className}`}>
      Feedback
    </button>
  );
}

const MAP_INFO = [
  ["Map", "LeafletTEST"],
  ["Library", "Leaflet"],
  ["Loads", "46"],
  ["Activities", "174"],
  ["Avg Activities per Load", "6.2"],
  ["Bounce Rate", "69.6%"],
  ["First Loaded", "June 4, 2015"],
  ["Last Loaded", "in 5 minutes"],
];

function MapInfoTable() {
  return (
    <table className="h-[458px] w-full table-fixed text-left text-[25px] leading-8">
      <tbody>
        {MAP_INFO.map(([k, v], i) => (
          <tr key={k} className="border-t-2 border-[#ddd] odd:bg-[#f9f9f9] even:bg-white">
            <th scope="row" className="w-[64%] px-[10px] pb-[3px]">{k}</th>
            <td className={i === 0 ? "px-[10px] pb-[3px] font-bold" : "px-[10px] pb-[3px]"}>{v}</td>
          </tr>
        ))}
      </tbody>
    </table>
  );
}

function Swatch({ className }: { className: string }) {
  return <span className={`block h-[26px] w-[22px] shadow-[2px_3px_5px_rgba(0,0,0,0.35)] ${className}`} />;
}

const LAYERS = [
  { name: "Extra Tile Layer", color: "bg-[#f15854]", loads: "36", avg: "637", min: "1,924", max: "1,291" },
  { name: "Extra Tile Layer", color: "bg-[#faa43a]", loads: "74", avg: "422", min: "12", max: "3,107" },
  { name: "Tile Layer", color: "bg-[#5da5da]", loads: "137", avg: "452", min: "15", max: "2,013" },
  { name: "http://{s}.tile.openstreetmap.org/{z}/{x}/{y}.png", color: "bg-[#5da5da]", loads: "3", avg: "205", min: "119", max: "428" },
];

function LayerTable() {
  return (
    <table className="ml-[118px] w-[1374px] table-fixed text-right text-[25px] leading-8">
      <colgroup>
        <col />
        <col className="w-[98px]" />
        <col className="w-[65px]" />
        <col className="w-[83px]" />
        <col className="w-[83px]" />
      </colgroup>
      <thead>
        <tr className="h-[57px] bg-white">
          <td colSpan={2} />
          <th colSpan={3} scope="colgroup" className="text-center">Time (ms)</th>
        </tr>
        <tr className="h-[58px] border-y-2 border-[#ddd] bg-white">
          <th scope="col" className="px-[10px] text-left">Layer</th>
          <th scope="col" className="pr-[10px]">Loads</th>
          <th scope="col" className="pr-[10px]">Avg</th>
          <th scope="col" className="pr-[10px]">Min</th>
          <th scope="col" className="pr-[10px]">Max</th>
        </tr>
      </thead>
      <tbody>
        {LAYERS.map((l, i) => (
          <tr key={i} className="h-[58px] border-t-4 border-[#ddd] bg-[#f9f9f9] first:border-t-2">
            <td className="px-[10px]">
              <div className="flex items-start gap-[20px] pt-[6px]">
                <Swatch className={`mt-[3px] ${l.color}`} />
                <button type="button" className="h-[43px] rounded-[5px] border-2 border-[#ccc] bg-white px-[9px] text-[24px]">
                  {l.name}
                </button>
              </div>
            </td>
            <td className="pr-[10px]">{l.loads}</td>
            <td className="pr-[10px]">{l.avg}</td>
            <td className="pr-[10px]">{l.min}</td>
            <td className="pr-[10px]">{l.max}</td>
          </tr>
        ))}
      </tbody>
    </table>
  );
}

const RADIO =
  "size-7 appearance-none rounded-full border-2 border-[#bbb] bg-white checked:border-[10px] checked:border-[#3b99fc]";
const BOX = "absolute rounded-[9px] bg-white shadow-[0_2px_10px_rgba(0,0,0,0.55)]";

function MapPanel() {
  return (
    <div className="relative text-[24px]">
      <WorldMap />
      <div className={`${BOX} top-5 left-5 flex w-[51px] flex-col overflow-hidden`}>
        <button type="button" aria-label="Zoom in" className="flex h-[52px] items-center justify-center border-b-2 border-[#ccc] pt-[6px]">
          <svg viewBox="0 0 20 20" className="size-5" stroke="#000" strokeWidth="4" aria-hidden="true"><path d="M0 10H20M10 0V20" /></svg>
        </button>
        <button type="button" aria-label="Zoom out" className="flex h-[51px] items-center justify-center pt-[6px]">
          <svg viewBox="0 0 20 20" className="size-5" stroke="#000" strokeWidth="4" aria-hidden="true"><path d="M2 10H18" /></svg>
        </button>
      </div>
      <button type="button" aria-label="Full screen" className={`${BOX} top-[142px] left-5 flex size-[51px] items-center justify-center`}>
        <svg viewBox="0 0 32 32" className="size-8" fill="none" stroke="#404040" strokeWidth="4" aria-hidden="true">
          <path d="M2 12V2H12M20 2H30V12M30 20V30H20M12 30H2V20" />
        </svg>
      </button>
      <fieldset className={`${BOX} top-5 right-5 h-[164px] w-[181px] px-3 pt-3 font-bold`}>
        <div className="leading-9">Intensity</div>
        <label className="ml-[9px] flex h-[50px] items-center gap-1">
          <input type="radio" name="intensity" defaultChecked className={RADIO} />
          Global
        </label>
        <label className="ml-[9px] flex h-[50px] items-center gap-1 whitespace-nowrap">
          <input type="radio" name="intensity" className={RADIO} />
          This View
        </label>
      </fieldset>
      <div className={`${BOX} right-5 bottom-[51px] flex h-[142px] w-[134px] flex-col gap-2 px-[15px] pt-[17px] font-bold`}>
        <div className="leading-7">Activities</div>
        <div className="flex items-center gap-[15px] leading-8"><span className="size-8 bg-[#80ff80]" />1</div>
        <div className="flex items-center gap-[15px] leading-8"><span className="size-8 bg-[#ff8080]" />4</div>
      </div>
      <div className="absolute right-0 bottom-0 h-8 bg-[#f0f0f0]/90 px-[10px] text-[22px] leading-8 text-[#333]">
        <a href="#leaflet" className="text-black">Leaflet</a> | Map data © <a href="#osm" className="text-black">OpenStreetMap</a> contributors,{" "}
        <a href="#license" className="text-black">CC-BY-SA</a>, Imagery © <a href="#mapbox" className="text-black">Mapbox</a>
      </div>
    </div>
  );
}

function Weave() {
  return (
    <svg className="absolute inset-0 -z-10 size-full" aria-hidden="true">
      <defs>
        <pattern id="weave" width="8" height="16" patternUnits="userSpaceOnUse">
          <rect width="8" height="16" fill="#fcfcfc" />
          <path d="M1 7L7 1M1 9L7 15" stroke="#ebebeb" strokeWidth="3" strokeLinecap="round" />
        </pattern>
      </defs>
      <rect width="100%" height="100%" fill="url(#weave)" />
    </svg>
  );
}

const DATE_INPUT =
  "h-[67px] w-[339px] rounded-[9px] border-2 border-[#ccc] bg-white px-[24px] text-[28px] text-[#555] shadow-[inset_0_2px_3px_rgba(0,0,0,0.08)]";

export default function App() {
  return (
    <div className="relative isolate overflow-hidden font-['Liberation_Sans',Arial,sans-serif] text-[#333]">
      <Weave />
      <header className="grid h-[118px] grid-cols-3 items-center bg-[#f0f0f0] text-[32px] shadow-[0_4px_16px_rgba(0,0,0,0.12)]">
        <nav aria-label="Breadcrumb" className="pt-1 pl-[69px]">
          <a href="#sites" className="text-[#a6a6a6]">My Sites</a> •{" "}
          <a href="#maps-example" className="text-[#a6a6a6]">maps-example</a> • <span className="text-[#444]">LeafletTEST</span>
        </nav>
        <div className="flex justify-center"><Logo /></div>
        <div className="pt-1 pr-[38px] text-right"><a href="#signout">Sign Out</a></div>
      </header>

      <div className="relative flex justify-center pl-[30px]">
        <div className="flex h-[87px] w-[809px] items-center justify-center gap-2 bg-[#f0f0f0] shadow-[6px_8px_14px_rgba(0,0,0,0.08)]">
          <input aria-label="From date" defaultValue="2015-06-04" className={DATE_INPUT} />
          <CalendarIcon />
          <ArrowsIcon />
          <CalendarIcon />
          <input aria-label="To date" defaultValue="2015-06-11" className={DATE_INPUT} />
        </div>
      </div>

      <main className="relative mr-[59px] ml-[30px] pt-3">
        <Panel title="Map Info">
          <div className="grid grid-cols-[782fr_1645fr] items-start pb-[39px]">
            <MapInfoTable />
            <LoadsChart />
          </div>
        </Panel>

        <Panel title="Tile Layer Info" className="relative mt-[49px]">
          <TileChart />
          <div className="pb-[59px]"><LayerTable /></div>
          <FeedbackButton className="top-[435px] right-[67px]" />
        </Panel>

        <Panel title="Map Loads by Activity" className="relative mt-10">
          <ActivityChart />
          <div className="pb-[60px]">
            <div className="ml-[118px] flex h-[57px] w-[158px] items-center gap-[19px] border-t-2 border-[#ddd] bg-[#f9f9f9] px-[10px] text-[25px]">
              <Swatch className="bg-[#4499c9]" />
              My Map
            </div>
          </div>
          <FeedbackButton className="top-[110px] right-[67px]" />
        </Panel>

        <Panel title="Map Activity by Zoom Level" className="mt-10">
          <ZoomChart />
          <div className="pb-5"><MapPanel /></div>
        </Panel>
      </main>

      <footer className="relative mr-[59px] ml-[30px] flex flex-col items-center pt-[81px] text-[25px]">
        <nav aria-label="Footer" className="flex h-[30px] items-center gap-4 text-black">
          {["Home", "Terms", "Privacy", "Help", "Sites"].map((t) => (
            <a key={t} href={`#${t.toLowerCase()}`} className="border-r-2 border-[#999] pr-[11px] leading-[30px] last:border-0 last:pr-0">
              {t}
            </a>
          ))}
        </nav>
        <p className="mt-[25px] flex h-[34px] items-center">
          ©&nbsp;
          <svg viewBox="0 0 18 22" className="mx-1 h-[18px] w-[16px]" fill="none" stroke="#ff8a2b" strokeWidth="5" aria-hidden="true">
            <path d="M1 2L15 11L1 20" />
          </svg>
          <span className="font-['DejaVu_Sans',sans-serif] text-[24px]">
            spark<b>geo</b> 2015
          </span>
        </p>
        <FeedbackButton className="right-[67px] bottom-0" />
      </footer>
    </div>
  );
}
